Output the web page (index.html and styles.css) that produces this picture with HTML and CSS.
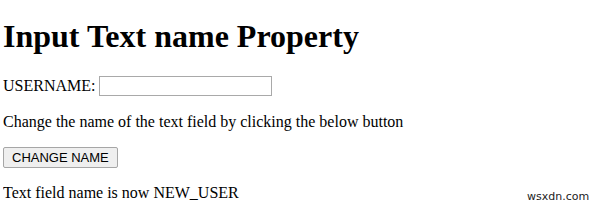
FILE: index.html
```html
<!DOCTYPE html>
<html lang="en">
<head>
  <meta charset="UTF-8">
  <title>Input Text name Property</title>
  <link rel="stylesheet" href="styles.css">
</head>
<body>
  <h1>Input Text name Property</h1>
  <p>USERNAME: <input type="text" id="user" name="USR_NAME"></p>
  <p class="gap">Change the name of the text field by clicking the below button</p>
  <button class="btn">CHANGE NAME</button>
  <p id="sample">Text field name is now NEW_USER</p>
  <span class="mark">wsxdn.com</span>
</body>
</html>
```

FILE: styles.css
```css
body {
  font-family: 'Liberation Serif', 'Times New Roman', serif;
  font-size: 16px;
  color: #000;
  background: #fff;
  margin: 0 3px;
}
h1 {
  font-size: 32px;
  margin: 18px 0 21px;
}
p {
  margin: 16px 0 15px;
}
p.gap {
  margin-top: 17px;
  margin-bottom: 16px;
}
input[type="text"] {
  width: 167px;
  height: 16px;
  padding: 1px 2px;
  border: 1px solid #a9a9a9;
  font-size: 13px;
}
.btn {
  font-family: 'Liberation Sans', Arial, sans-serif;
  font-size: 13px;
  padding: 2px 8px;
  background: #efefef;
  border: 1px solid #a6a6a6;
  border-radius: 2px;
}
.mark {
  position: absolute;
  left: 527px;
  top: 191px;
  line-height: 12px;
  font-family: 'DejaVu Sans', sans-serif;
  font-size: 11px;
  color: #222;
}
```
